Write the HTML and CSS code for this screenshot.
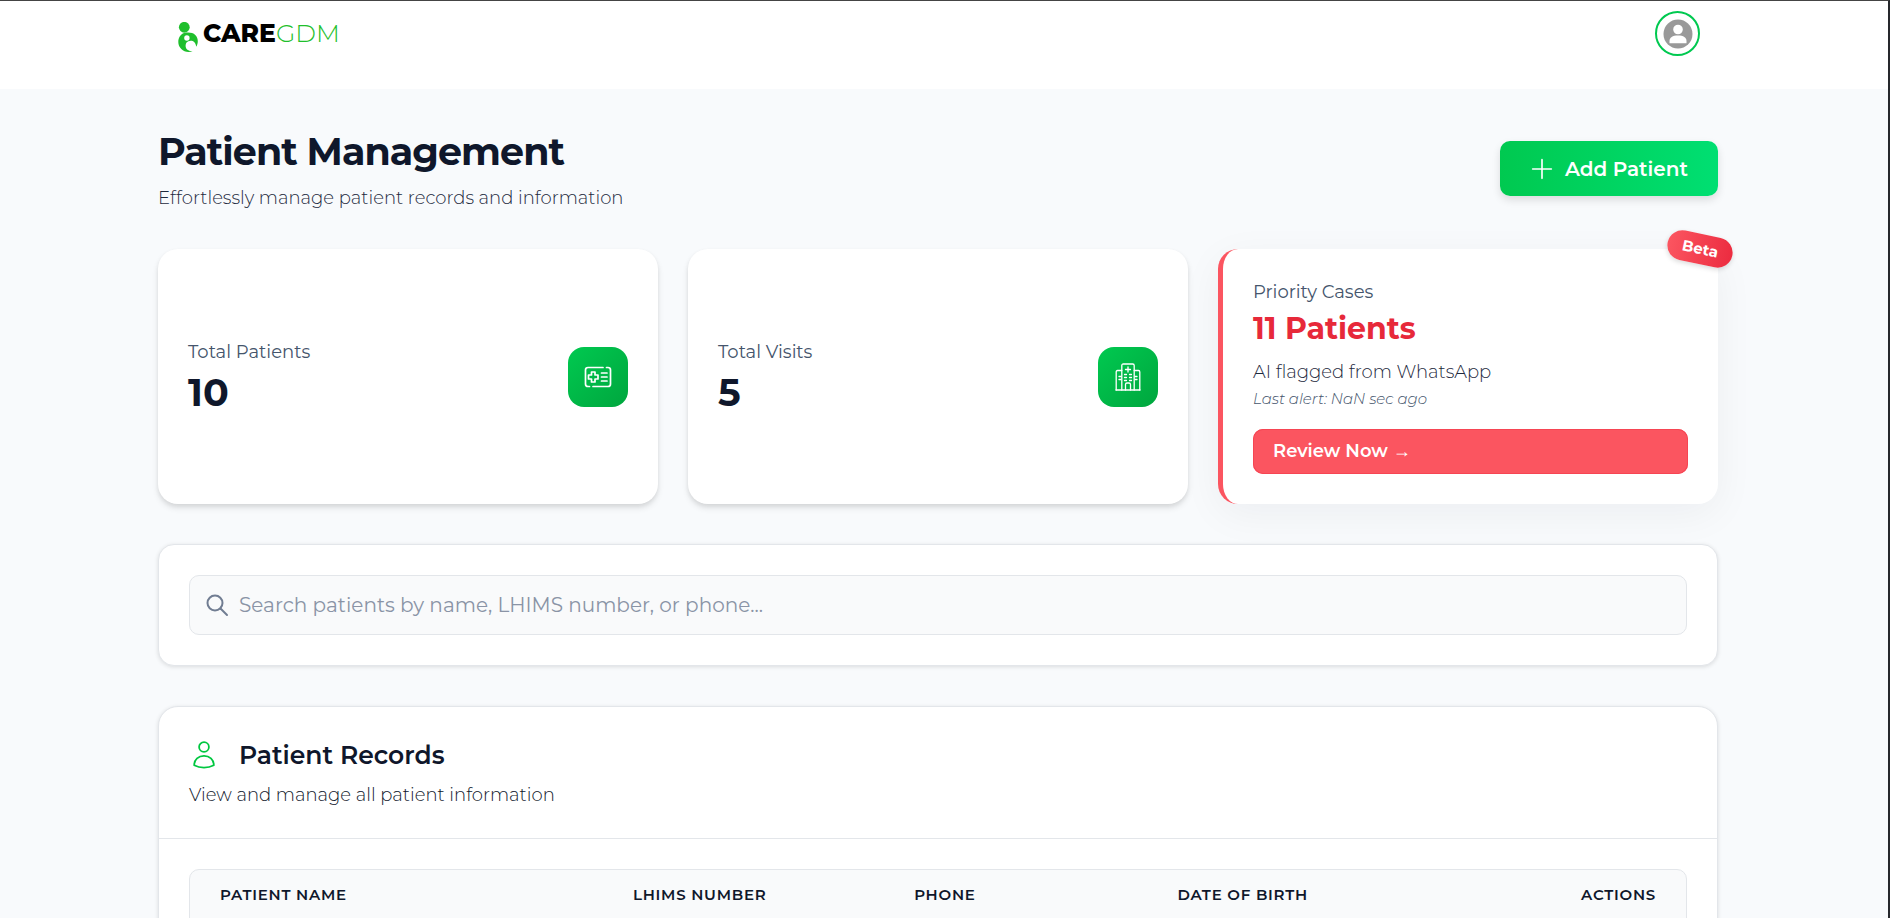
FILE: index.html
```html
<!DOCTYPE html>
<html lang="en">
<head>
  <meta charset="UTF-8" />
  <meta name="viewport" content="width=device-width, initial-scale=1" />
  <title>Patient Management - CareGDM</title>
  <link rel="stylesheet" href="styles.css">
</head>
<body>

<div class="page">
  <!-- Top bar -->
  <header class="topbar">
    <div class="topbar-inner">
      <a href="#" class="logo" aria-label="CareGDM home">
        <svg class="logo-mark" viewBox="0 0 20 30" width="20" height="30" aria-hidden="true">
          <circle cx="6.300" cy="5.300" r="5.400" fill="#1fbf2c"/>
          <path d="M6.500 11 C3 11.500 .3 15.500 .3 20 C.3 25.500 5 30 10.500 30 C12 30 13.300 29.600 14.500 29 C10 29.500 7.600 27 7.600 23.800 C7.600 21.500 8.700 19.900 10.300 19.300 C13.500 17.600 17.700 19.300 18.300 24.800 C20.500 21 20.300 16 17.500 13.200 C14.500 10.300 10 10.300 6.500 11 Z" fill="#1fbf2c"/>
          <circle cx="8.900" cy="16" r="2.700" fill="#fff"/>
        </svg>
        <span class="logo-care">CARE</span><span class="logo-gdm">GDM</span>
      </a>
      <button class="avatar" aria-label="Account">
        <svg viewBox="0 0 30 30" width="30" height="30" aria-hidden="true">
          <circle cx="15" cy="15" r="14.500" fill="#999"/>
          <circle cx="15" cy="10.500" r="4.800" fill="#fff"/>
          <path d="M6.500 24.300 V22 C6.500 18.500 9.500 16.500 15 16.500 S23.500 18.500 23.500 22 V24.300 Z" fill="#fff"/>
        </svg>
      </button>
    </div>
  </header>

  <main class="content">
    <section class="page-head">
      <div>
        <h1>Patient Management</h1>
        <p>Effortlessly manage patient records and information</p>
      </div>
      <button class="btn-add">
        <svg viewBox="0 0 20 20" width="22" height="22" aria-hidden="true">
          <path d="M10 1.500 V18.500 M1.500 10 H18.500" stroke="#fff" stroke-width="1.500" stroke-linecap="round"/>
        </svg>
        Add Patient
      </button>
    </section>

    <!-- Stats -->
    <section class="stats">
      <div class="card stat">
        <div>
          <p class="stat-label">Total Patients</p>
          <p class="stat-value">10</p>
        </div>
        <div class="stat-icon">
          <svg viewBox="0 0 28 22" width="28" height="22" fill="none" stroke="#fff" stroke-width="1.700" stroke-linecap="round" stroke-linejoin="round" aria-hidden="true">
            <path d="M19 1.500 H4 Q1.500 1.500 1.500 4 V18 Q1.500 20.500 4 20.500 H5.500"/>
            <path d="M9 20.500 H24 Q26.500 20.500 26.500 18 V4 Q26.500 1.500 24 1.500 H22.500"/>
            <path d="M7.500 6 H11 V9 H14 V13 H11 V16 H7.500 V13 H4.500 V9 H7.500 Z"/>
            <path d="M17.500 7 H23 M17.500 11 H23 M17.500 15 H23"/>
          </svg>
        </div>
      </div>

      <div class="card stat">
        <div>
          <p class="stat-label">Total Visits</p>
          <p class="stat-value">5</p>
        </div>
        <div class="stat-icon">
          <svg viewBox="0 0 26 28" width="26" height="28" fill="none" stroke="#fff" stroke-width="1.300" stroke-linecap="round" stroke-linejoin="round" aria-hidden="true">
            <path d="M1 27 H25"/>
            <path d="M6.800 27 V2.500 Q6.800 1 8.300 1 H17.700 Q19.200 1 19.200 2.500 V27"/>
            <path d="M6.800 7.500 H2.500 Q1.200 7.500 1.200 9 V27 M19.200 7.500 H23.500 Q24.800 7.500 24.800 9 V27"/>
            <path d="M10.500 27 V21.500 Q10.500 20 12 20 H14 Q15.500 20 15.500 21.500 V27"/>
            <path d="M13 4 V9 M10.500 6.500 H15.500"/>
            <path d="M9.500 11.500 H11.500 M14.500 11.500 H16.500 M9.500 14.500 H11.500 M14.500 14.500 H16.500 M9.500 17.500 H11.500 M14.500 17.500 H16.500"/>
            <path d="M4 13.500 H6 M4 16.500 H6 M20 13.500 H22 M20 16.500 H22"/>
          </svg>
        </div>
      </div>

      <div class="card priority">
        <span class="badge">Beta</span>
        <p class="stat-label">Priority Cases</p>
        <p class="priority-count">11 Patients</p>
        <p class="priority-source">AI flagged from WhatsApp</p>
        <p class="priority-alert">Last alert: NaN sec ago</p>
        <a href="#" class="btn-review">Review Now <span class="arrow">→</span></a>
      </div>
    </section>

    <!-- Search -->
    <section class="panel search">
      <div class="search-box">
        <svg viewBox="0 0 24 24" width="24" height="24" fill="none" stroke="#717d92" stroke-width="2" stroke-linecap="round" aria-hidden="true">
          <circle cx="10" cy="10" r="7.500"/>
          <path d="M15.500 15.500 L22 22"/>
        </svg>
        <input type="text" id="search" aria-label="Search patients" placeholder="Search patients by name, LHIMS number, or phone..." />
      </div>
    </section>

    <!-- Records -->
    <section class="panel records">
      <div class="records-head">
        <h2>
          <svg viewBox="0 0 30 30" width="30" height="30" fill="none" stroke="#00c740" stroke-width="1.800" stroke-linecap="round" stroke-linejoin="round" aria-hidden="true">
            <circle cx="15" cy="7" r="4.900"/>
            <path d="M5.200 25.300 C5.200 19.500 9.500 15.800 15 15.800 S24.800 19.500 24.800 25.300 C22 26.800 18.500 27.600 15 27.600 S8 26.800 5.200 25.300 Z"/>
          </svg>
          Patient Records
        </h2>
        <p>View and manage all patient information</p>
      </div>
      <div class="records-body">
        <div class="table-wrap">
          <table>
            <thead>
              <tr>
                <th class="col-name">Patient Name</th>
                <th class="col-lhims">LHIMS Number</th>
                <th class="col-phone">Phone</th>
                <th>Date of Birth</th>
                <th class="col-actions">Actions</th>
              </tr>
            </thead>
          </table>
        </div>
      </div>
    </section>
  </main>
</div>

</body>
</html>
```

FILE: styles.css
```css
:root {
  --bg: #f8fafc;
  --line: #e3e6ea;
  --ink: #0f172b;
  --ink-2: #1d293d;
  --muted: #45556c;
  --green: #00c950;
  --green-dark: #00a63e;
  --red: #fb5560;
  --red-dark: #e7293a;
}

* {
  box-sizing: border-box;
}

body {
  margin: 0;
  font-family: Montserrat, Inter, sans-serif;
  background: var(--bg);
  color: var(--ink);
}

h1, h2, p {
  margin: 0;
}

button {
  font-family: inherit;
  cursor: pointer;
}

a {
  text-decoration: none;
}

.page {
  height: 100vh;
  overflow-y: auto;
  scrollbar-width: none;
  border-top: 1px solid #444;
  border-right: 2px solid #26282c;
}

/* Top bar */
.topbar {
  height: 88px;
  padding: 10px 12px 0 0;
  background: #fff;
}

.topbar-inner {
  display: flex;
  justify-content: space-between;
  align-items: flex-start;
  max-width: 1560px;
  margin: 0 auto;
  padding: 0 18px 0 20px;
}

.logo {
  display: flex;
  align-items: flex-start;
  padding-top: 11px;
  font-size: 25px;
  line-height: 22px;
}

.logo-mark {
  margin-right: 5px;
}

.logo-care {
  font-weight: 800;
  color: #000;
}

.logo-gdm {
  font-weight: 300;
  color: #1fbf2c;
}

.avatar {
  display: flex;
  align-items: center;
  justify-content: center;
  width: 45px;
  height: 45px;
  padding: 0;
  border: 2px solid var(--green);
  border-radius: 50%;
  background: #fff;
}

/* Page */
.content {
  max-width: 1572px;
  margin: 0 auto;
  padding: 40px 12px 40px 0;
}

.page-head {
  display: flex;
  justify-content: space-between;
  align-items: flex-start;
  margin-bottom: 38px;
}

.page-head h1 {
  font-size: 38px;
  line-height: 45px;
  font-weight: 700;
  letter-spacing: -0.025em;
}

.page-head p {
  margin-top: 12px;
  font-size: 18px;
  line-height: 25px;
  font-weight: 300;
  color: var(--ink-2);
}

.btn-add {
  display: flex;
  align-items: center;
  gap: 12px;
  height: 55px;
  margin-top: 12px;
  padding: 0 30px 0 31px;
  border: none;
  border-radius: 10px;
  background: linear-gradient(to right, var(--green), #00df72);
  color: #fff;
  font-size: 20px;
  font-weight: 600;
  box-shadow: 0 4px 8px rgba(0, 0, 0, 0.12);
}

/* Stats */
.stats {
  display: grid;
  grid-template-columns: repeat(3, 1fr);
  gap: 30px;
  margin-bottom: 40px;
}

.card {
  border-radius: 20px;
  background: #fff;
  padding: 30px;
  box-shadow: 0 4px 6px rgba(0, 0, 0, 0.1), 0 2px 4px rgba(0, 0, 0, 0.06);
}

.stat {
  display: flex;
  justify-content: space-between;
  align-items: center;
}

.stat-label {
  font-size: 18px;
  line-height: 26px;
  color: var(--muted);
}

.stat-value {
  margin-top: 5px;
  font-size: 38px;
  line-height: 45px;
  font-weight: 700;
}

.stat-icon {
  display: flex;
  align-items: center;
  justify-content: center;
  width: 60px;
  height: 60px;
  border-radius: 16px;
  background: linear-gradient(to bottom right, var(--green), var(--green-dark));
}

.priority {
  position: relative;
  border-left: 5px solid var(--red);
  box-shadow: 0 10px 40px rgba(15, 23, 43, 0.05);
}

.priority-count {
  margin-top: 4px;
  font-size: 30px;
  line-height: 40px;
  font-weight: 700;
  color: var(--red-dark);
}

.priority-source {
  margin-top: 10px;
  font-size: 18px;
  line-height: 26px;
  font-weight: 300;
  color: var(--ink-2);
}

.priority-alert {
  margin-top: 4px;
  font-size: 15px;
  line-height: 20px;
  font-style: italic;
  font-weight: 300;
  color: var(--muted);
}

.btn-review {
  display: block;
  margin-top: 20px;
  padding: 0 20px;
  border-radius: 10px;
  background: var(--red);
  color: #fff;
  font-size: 18px;
  line-height: 45px;
  font-weight: 600;
  box-shadow: inset 0 0 0 1px #f64553;
}

.arrow {
  font-family: "Liberation Sans", sans-serif;
  font-weight: 400;
  line-height: 20px;
}

.badge {
  position: absolute;
  top: -15px;
  right: -15px;
  padding: 0 15px;
  border-radius: 15px;
  background: linear-gradient(to right, var(--red), #ec2c40);
  color: #fff;
  font-size: 15px;
  line-height: 30px;
  font-weight: 700;
  transform: rotate(12deg);
  box-shadow: 0 2px 5px rgba(0, 0, 0, 0.15);
}

/* Search */
.panel {
  border: 1px solid var(--line);
  border-radius: 20px;
  background: #fff;
  box-shadow: 0 1px 4px rgba(0, 0, 0, 0.12);
}

.search {
  margin-bottom: 40px;
  padding: 30px;
  border-radius: 16px;
}

.search-box {
  display: flex;
  align-items: center;
  gap: 10px;
  height: 60px;
  padding: 0 15px;
  border: 1px solid var(--line);
  border-radius: 10px;
  background: #f9fafb;
}

.search-box input {
  flex: 1;
  padding: 0;
  border: none;
  outline: none;
  background: none;
  font-family: inherit;
  font-size: 20px;
  font-weight: 400;
  color: var(--ink);
}

.search-box input::placeholder {
  color: #8a94a6;
}

/* Records */
.records-head {
  padding: 30px;
  border-bottom: 1px solid var(--line);
}

.records-head h2 {
  display: flex;
  align-items: center;
  gap: 20px;
  font-size: 25px;
  line-height: 36px;
  font-weight: 600;
}

.records-head p {
  margin-top: 10px;
  font-size: 18px;
  line-height: 25px;
  font-weight: 300;
  color: var(--ink);
}

.records-body {
  padding: 30px;
}

.table-wrap {
  min-height: 240px;
  border: 1px solid var(--line);
  border-radius: 10px;
  background: #f9fafb;
}

table {
  width: 100%;
  border-collapse: collapse;
  table-layout: fixed;
}

th {
  padding: 15px 30px;
  font-size: 15px;
  line-height: 20px;
  font-weight: 600;
  letter-spacing: 0.05em;
  text-align: left;
  text-transform: uppercase;
  white-space: nowrap;
}

.col-name {
  width: 27.6%;
}

.col-lhims {
  width: 18.8%;
}

.col-phone {
  width: 17.6%;
}

.col-actions {
  text-align: right;
}

@media (max-width: 900px) {
  .content,
  .topbar {
    padding-left: 12px;
  }

  .stats {
    grid-template-columns: 1fr;
  }
}
```
